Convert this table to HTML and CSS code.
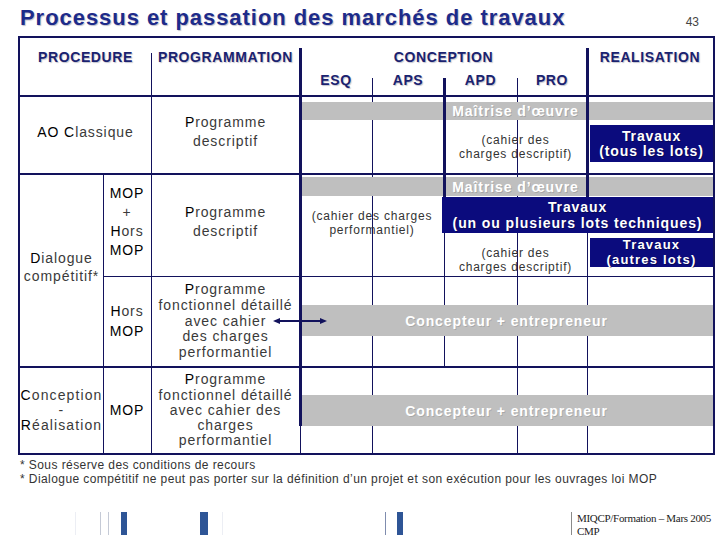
FILE: index.html
```html
<!DOCTYPE html>
<html lang="fr">
<head>
<meta charset="utf-8">
<title>Processus et passation des marchés de travaux</title>
<link rel="stylesheet" href="styles.css">
</head>
<body>
<header class="title-bar">
  <h1 class="title">Processus et passation des marchés de travaux</h1>
  <span class="page-no">43</span>
</header>

<div class="matrix">
  <!-- column headers -->
  <div class="hd hd-proc">PROCEDURE</div>
  <div class="hd hd-prog">PROGRAMMATION</div>
  <div class="hd hd-conc">CONCEPTION</div>
  <div class="hd hd-real">REALISATION</div>
  <div class="sub sub-esq">ESQ</div>
  <div class="sub sub-aps">APS</div>
  <div class="sub sub-apd">APD</div>
  <div class="sub sub-pro">PRO</div>

  <!-- rules -->
  <div class="hr hr-1"></div>
  <div class="hr hr-2"></div>
  <div class="hr hr-3"></div>
  <div class="hr hr-4"></div>
  <div class="vl vl-a"></div>
  <div class="vl vl-b"></div>
  <div class="vl thick vl-c"></div>
  <div class="vl vl-c2"></div>
  <div class="vl vl-d"></div>
  <div class="vl thick vl-e"></div>
  <div class="vl vl-e2"></div>
  <div class="vl vl-f"></div>
  <div class="vl thick vl-g"></div>
  <div class="vl vl-g2"></div>

  <!-- row 1 : AO classique -->
  <div class="cell c-ao"><span><span class="ini">AO C</span>lassique</span></div>
  <div class="cell c-prog1"><span><span class="ini">P</span>rogramme<br>descriptif</span></div>
  <div class="bar gray g1"></div>
  <div class="moe m1">Maîtrise d’œuvre</div>
  <div class="note n1">(cahier des<br>charges descriptif)</div>
  <div class="bar navy t1">Travaux<br>(tous les lots)</div>

  <!-- row 2 & 3 : dialogue compétitif -->
  <div class="cell c-dial"><span><span class="ini">D</span>ialogue<br>compétitif*</span></div>
  <div class="cell c-mop2 lh19"><span class="ini">MOP</span><span>+</span><span><span class="ini">H</span>ors</span><span class="ini">MOP</span></div>
  <div class="cell c-prog2"><span><span class="ini">P</span>rogramme<br>descriptif</span></div>
  <div class="bar gray g2"></div>
  <div class="moe m2">Maîtrise d’œuvre</div>
  <div class="note n2">(cahier des charges<br>performantiel)</div>
  <div class="bar navy t2">Travaux<br>(un ou plusieurs lots techniques)</div>
  <div class="note n3">(cahier des<br>charges descriptif)</div>
  <div class="bar navy t3">Travaux<br>(autres lots)</div>

  <div class="cell c-hors"><span><span class="ini">H</span>ors<br><span class="ini">MOP</span></span></div>
  <div class="cell c-prog3"><span><span class="ini">P</span>rogramme<br>fonctionnel détaillé<br>avec cahier<br>des charges<br>performantiel</span></div>
  <div class="bar gray g3">Concepteur + entrepreneur</div>
  <svg class="arrow" width="54" height="10" viewBox="0 0 54 10" aria-hidden="true">
    <line x1="5" y1="5" x2="49" y2="5" stroke="#12125c" stroke-width="2"/>
    <polygon points="0,5 7,2 7,8" fill="#12125c"/>
    <polygon points="54,5 47,2 47,8" fill="#12125c"/>
  </svg>

  <!-- row 4 : conception réalisation -->
  <div class="cell c-cr"><span><span class="ini">C</span>onception<br>-<br><span class="ini">R</span>éalisation</span></div>
  <div class="cell c-mop4"><span class="ini">MOP</span></div>
  <div class="cell c-prog4"><span><span class="ini">P</span>rogramme<br>fonctionnel détaillé<br>avec cahier des<br>charges<br>performantiel</span></div>
  <div class="bar gray g4">Concepteur + entrepreneur</div>
</div>

<div class="notes">
  <p>* Sous réserve des conditions de recours</p>
  <p>* Dialogue compétitif ne peut pas porter sur la définition d’un projet et son exécution pour les ouvrages loi MOP</p>
</div>

<footer class="footer">
  <span class="tick faint"></span>
  <span class="tick light"></span>
  <span class="tick light"></span>
  <span class="tick blue"></span>
  <span class="tick blue wide"></span>
  <span class="tick faint"></span>
  <span class="tick mid"></span>
  <span class="tick blue"></span>
  <span class="tick grey"></span>
  <div class="credit">MIQCP/Formation – Mars 2005<br>CMP</div>
</footer>
</body>
</html>
```

FILE: styles.css
```css
* { box-sizing: border-box; }

body {
  margin: 0;
  background: #ffffff;
  font-family: "Liberation Sans", Arial, sans-serif;
  color: #3a3a3a;
}

/* ---------- title ---------- */
.title-bar {
  display: flex;
  justify-content: space-between;
  align-items: flex-start;
  height: 36px;
  padding: 0 21px 0 20px;
}
.title {
  margin: 5px 0 0;
  font-size: 22px;
  line-height: 26px;
  font-weight: bold;
  letter-spacing: 0.95px;
  color: #1d2b8a;
  text-shadow: 1px 1px 1px rgba(40, 40, 80, 0.3);
}
.page-no {
  margin-top: 14px;
  font-size: 12px;
  line-height: 16px;
  color: #444;
}

/* ---------- matrix ---------- */
.matrix {
  display: grid;
  width: 697px;
  margin-left: 18px;
  border: 2px solid #12125c;
  grid-template-columns: 83px 48px 149px 72px 72px 73px 70px 126px;
  grid-template-rows:
    30px 27px 2px
    5px 18px 5px 37px 11px 2px
    2px 19px 1px 36px 5px 29px 9px 1px
    28px 31px 30px 2px
    27px 31px 27px;
}

.hd, .sub {
  text-align: center;
  font-weight: bold;
  font-size: 14px;
  line-height: 16px;
  letter-spacing: 0.6px;
  color: #1a2270;
  text-shadow: 1px 1px 1px rgba(60, 60, 90, 0.3);
  z-index: 4;
}
.hd { padding-top: 11px; grid-row: 1; }
.sub { padding-top: 4px; grid-row: 2; }
.hd-proc { grid-column: 1 / 3; }
.hd-prog { grid-column: 3; }
.hd-conc { grid-column: 4 / 8; }
.hd-real { grid-column: 8; }
.sub-esq { grid-column: 4; }
.sub-aps { grid-column: 5; }
.sub-apd { grid-column: 6; }
.sub-pro { grid-column: 7; }

/* rules */
.hr { background: #12125c; z-index: 2; }
.hr-1 { grid-column: 1 / 9; grid-row: 3; }
.hr-2 { grid-column: 1 / 9; grid-row: 9; }
.hr-3 { grid-column: 2 / 9; grid-row: 17; }
.hr-4 { grid-column: 1 / 9; grid-row: 21; }

.vl {
  justify-self: start;
  width: 0;
  border-left: 1px solid #12125c;
  z-index: 0;
}
.vl.thick {
  border-left-width: 3px;
  margin-left: -1px;
  z-index: 2;
}
.vl-a  { grid-column: 2; grid-row: 10 / 25; }
.vl-b  { grid-column: 3; grid-row: 1 / 25; margin-top: 15px; }
.vl-c  { grid-column: 4; grid-row: 1 / 24; margin-top: 10px; }
.vl-c2 { grid-column: 4; grid-row: 24 / 25; }
.vl-d  { grid-column: 5; grid-row: 2 / 25; margin-top: 10px; }
.vl-e  { grid-column: 6; grid-row: 2 / 13; margin-top: 10px; }
.vl-e2 { grid-column: 6; grid-row: 13 / 22; }
.vl-f  { grid-column: 7; grid-row: 2 / 25; margin-top: 10px; }
.vl-g  { grid-column: 8; grid-row: 1 / 13; margin-top: 10px; }
.vl-g2 { grid-column: 8; grid-row: 13 / 25; }

/* left text cells */
.cell {
  display: flex;
  flex-direction: column;
  justify-content: center;
  align-items: center;
  text-align: center;
  font-size: 14px;
  line-height: 19px;
  letter-spacing: 0.9px;
  color: #3a3a3a;
  z-index: 4;
}
.ini { color: #000; }
.c-ao    { grid-column: 1 / 3; grid-row: 4 / 9; padding-bottom: 6px; }
.c-prog1 { grid-column: 3; grid-row: 4 / 9; padding-bottom: 6px; }
.c-dial  { grid-column: 1; grid-row: 10 / 21; padding-bottom: 7px; line-height: 18px; }
.c-mop2  { grid-column: 2; grid-row: 10 / 17; padding-bottom: 8px; }
.c-prog2 { grid-column: 3; grid-row: 10 / 17; padding-bottom: 8px; }
.c-hors  { grid-column: 2; grid-row: 18 / 21; line-height: 19.5px; }
.c-prog3 { grid-column: 3; grid-row: 18 / 21; line-height: 15.75px; }
.c-cr    { grid-column: 1; grid-row: 22 / 25; line-height: 15px; letter-spacing: 1.1px; }
.c-mop4  { grid-column: 2; grid-row: 22 / 25; }
.c-prog4 { grid-column: 3; grid-row: 22 / 25; line-height: 15.3px; }

/* bars */
.bar {
  display: flex;
  justify-content: center;
  align-items: center;
  text-align: center;
  color: #fff;
  font-weight: bold;
  font-size: 14px;
  letter-spacing: 0.9px;
}
.gray {
  background: #bfbfbf;
  grid-column: 4 / 9;
  z-index: 1;
  text-shadow: 1px 1px 0 rgba(0, 0, 0, 0.12);
}
.g1 { grid-row: 5; margin-left: 2px; }
.g2 { grid-row: 11; margin-left: 2px; }
.g3 { grid-row: 19; }
.g4 { grid-row: 23; }

.navy {
  background: #0b0b7d;
  z-index: 3;
  text-shadow: 1px 1px 0 rgba(0, 0, 0, 0.35);
}
.t1 { grid-column: 8; grid-row: 7; margin-left: 3px; line-height: 15px; }
.t2 { grid-column: 6 / 9; grid-row: 13; margin-left: -2px; line-height: 16px; }
.t3 {
  grid-column: 8;
  grid-row: 15;
  margin-left: 3px;
  font-size: 13px;
  line-height: 14.5px;
  letter-spacing: 1.2px;
}

.moe {
  display: flex;
  justify-content: center;
  align-items: center;
  color: #fff;
  font-weight: bold;
  font-size: 14px;
  letter-spacing: 0.9px;
  text-shadow: 1px 1px 0 rgba(0, 0, 0, 0.15);
  grid-column: 6 / 8;
  z-index: 4;
}
.m1 { grid-row: 5; }
.m2 { grid-row: 11; }

.note {
  display: flex;
  justify-content: center;
  align-items: center;
  text-align: center;
  font-size: 12px;
  line-height: 14px;
  letter-spacing: 0.8px;
  color: #333;
  z-index: 4;
}
.n1 { grid-column: 6 / 8; grid-row: 6 / 9; }
.n2 { grid-column: 4 / 6; grid-row: 13 / 15; padding-top: 10px; }
.n3 { grid-column: 6 / 8; grid-row: 14 / 17; padding-top: 10px; }

.arrow {
  grid-column: 3 / 5;
  grid-row: 19;
  align-self: center;
  margin-left: 122px;
  z-index: 5;
}

/* ---------- footnotes ---------- */
.notes {
  margin: 3px 0 0 20px;
  font-size: 12px;
  line-height: 14px;
  letter-spacing: 0.42px;
  color: #333;
}
.notes p { margin: 0; }

/* ---------- footer ---------- */
.footer {
  display: flex;
  height: 23px;
  margin-top: 26px;
}
.tick { width: 1px; }
.tick.faint { background: #eceef4; }
.tick.light { background: #c5cad6; }
.tick.mid { background: #7f8cae; }
.tick.grey { background: #8a8a8a; }
.tick.blue { width: 6px; background: #2e5596; }
.tick.blue.wide { width: 8px; }
.tick:nth-child(1) { margin-left: 75px; }
.tick:nth-child(2) { margin-left: 24px; }
.tick:nth-child(3) { margin-left: 7px; }
.tick:nth-child(4) { margin-left: 12px; }
.tick:nth-child(5) { margin-left: 73px; }
.tick:nth-child(6) { margin-left: 14px; }
.tick:nth-child(7) { margin-left: 162px; }
.tick:nth-child(8) { margin-left: 11px; }
.tick:nth-child(9) { margin-left: 168px; }
.credit {
  margin-left: 5px;
  font-family: "Liberation Serif", "Times New Roman", serif;
  font-size: 11px;
  line-height: 13px;
  letter-spacing: -0.3px;
  color: #222;
}
```
